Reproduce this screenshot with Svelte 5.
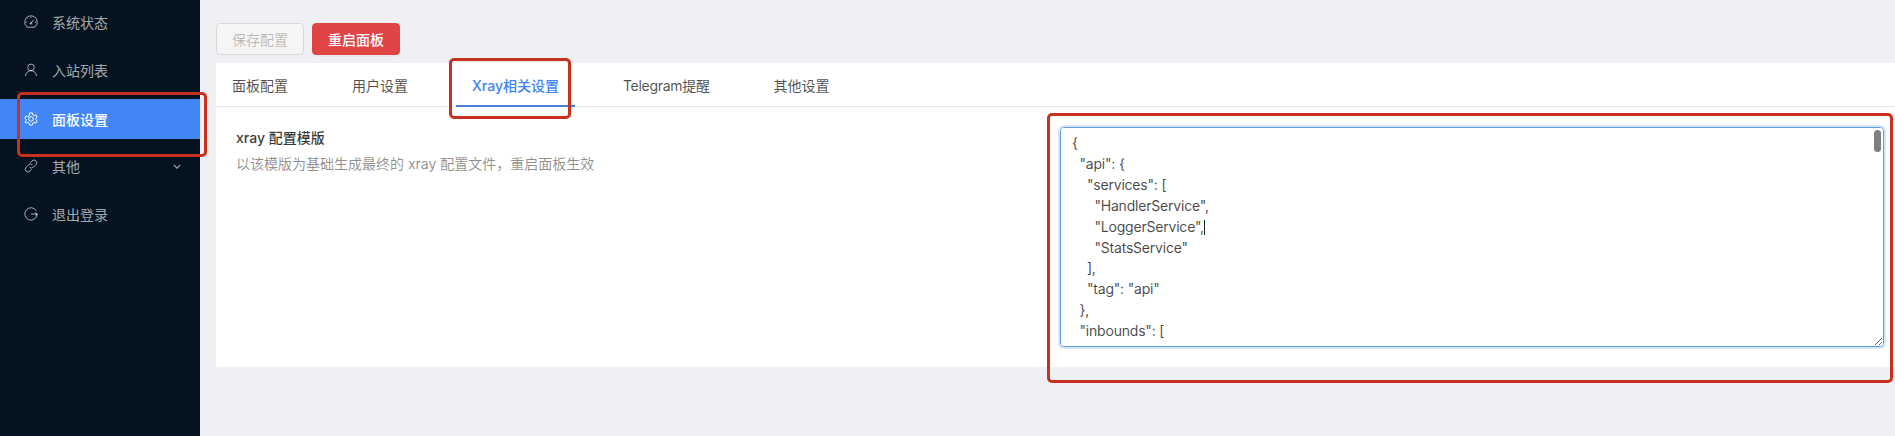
<script>
  const nav = [
    { label: '系统状态', icon: 'dashboard' },
    { label: '入站列表', icon: 'user' },
    { label: '面板设置', icon: 'setting', active: true },
    { label: '其他', icon: 'link', sub: true },
    { label: '退出登录', icon: 'logout' }
  ];
  const tabs = ['面板配置', '用户设置', 'Xray相关设置', 'Telegram提醒', '其他设置'];

  const rules = Array.from({ length: 14 }, (_, i) => `      {
        "type": "field",
        "inboundTag": ["rule-${i}"],
        "outboundTag": "direct"
      },`).join('\n');

  const config = `{
  "api": {
    "services": [
      "HandlerService",
      "LoggerService",
      "StatsService"
    ],
    "tag": "api"
  },
  "inbounds": [
    {
      "listen": "127.0.0.1",
      "port": 62789,
      "protocol": "dokodemo-door",
      "settings": {
        "address": "127.0.0.1"
      },
      "tag": "api"
    }
  ],
  "outbounds": [
    {
      "protocol": "freedom",
      "settings": {}
    },
    {
      "protocol": "blackhole",
      "settings": {},
      "tag": "blocked"
    }
  ],
  "routing": {
    "rules": [
${rules}
    ]
  }
}`;
</script>

<div class="page">
  <aside class="sider">
    {#each nav as item}
      <div class="nav-item" class:active={item.active}>
        <svg class="icon" viewBox="0 0 14 14" fill="none" stroke="currentColor" stroke-width="1">
          {#if item.icon === 'dashboard'}
            <path d="M3.2 12.2A6.3 6.3 0 0 1 7 .9a6.3 6.3 0 0 1 3.8 11.3z" />
            <path d="M7.1 8.2 9.4 4.9M3 7H2.1M11.9 7H11M4 4.1l-.6-.6M7 2.9v-.9" />
            <circle cx="6.9" cy="8.4" r=".8" />
          {:else if item.icon === 'user'}
            <circle cx="7" cy="4.4" r="3.3" />
            <path d="M1.5 13c0-3 2.4-5.3 5.5-5.3s5.5 2.3 5.5 5.3" />
          {:else if item.icon === 'setting'}
            <path d="M5.7.9h2.6l.4 1.8 1.4.8 1.8-.6 1.3 2.2-1.4 1.3v1.2l1.4 1.3-1.3 2.2-1.8-.6-1.4.8-.4 1.8H5.7l-.4-1.8-1.4-.8-1.8.6L.8 9.9l1.4-1.3V7.4L.8 6.1l1.3-2.2 1.8.6 1.4-.8z" />
            <circle cx="7" cy="7" r="2.3" />
          {:else if item.icon === 'link'}
            <path d="M6.3 3.6 8 1.9a2.6 2.6 0 0 1 3.9 3.7L9.3 8.2a2.6 2.6 0 0 1-3.7 0" />
            <path d="M7.7 10.4 6 12.1a2.6 2.6 0 0 1-3.9-3.7l2.6-2.6a2.6 2.6 0 0 1 3.7 0" />
          {:else}
            <path d="M12.4 3.9A6.2 6.2 0 1 0 13.2 7" />
            <path d="M7 7h6.3M11.4 5.6 13.2 7l-1.8 1.4" />
          {/if}
        </svg>
        <span>{item.label}</span>
        {#if item.sub}
          <svg class="chevron" viewBox="0 0 10 6" fill="none" stroke="currentColor" stroke-width="1.4">
            <path d="M1 1l4 4 4-4" />
          </svg>
        {/if}
      </div>
    {/each}
  </aside>

  <main class="content">
    <div class="actions">
      <button class="btn" disabled>保存配置</button>
      <button class="btn danger">重启面板</button>
    </div>

    <section class="card">
      <div class="tabs">
        {#each tabs as tab}
          <div class="tab" class:current={tab.startsWith('Xray')} class:tight={tab.startsWith('Telegram')}>{tab}</div>
        {/each}
      </div>

      <div class="setting-row">
        <div class="meta">
          <div class="title">xray 配置模版</div>
          <div class="desc">以该模版为基础生成最终的 xray 配置文件，重启面板生效</div>
        </div>
        <div class="field">
          <textarea readonly spellcheck="false" value={config}></textarea>
          <i class="caret"></i>
          <i class="thumb"></i>
        </div>
      </div>
    </section>
  </main>

  <div class="mark mark-nav"></div>
  <div class="mark mark-tab"></div>
  <div class="mark mark-field"></div>
</div>

<style>
  :global(body) {
    margin: 0;
    overflow: hidden;
  }
  .page {
    position: relative;
    display: flex;
    height: 436px;
    background: #eff0f4;
    font-family: Inter, 'Noto Sans CJK SC', sans-serif;
    font-size: 14px;
    color: rgba(0, 0, 0, 0.65);
  }
  .sider {
    flex: 0 0 200px;
    background: #051220;
    padding-top: 3px;
    color: rgba(255, 255, 255, 0.65);
  }
  .nav-item {
    box-sizing: border-box;
    display: flex;
    align-items: center;
    height: 40px;
    margin-bottom: 8px;
    padding: 0 16px 2px 24px;
  }
  .nav-item.active {
    padding-bottom: 0;
    background: #4285f4;
    color: #fff;
    font-weight: 500;
  }
  .icon {
    flex: none;
    width: 14px;
    height: 14px;
    margin-right: 14px;
  }
  .chevron {
    width: 8px;
    height: 5px;
    margin-left: auto;
    margin-right: 3px;
  }
  .content {
    flex: 1;
    min-width: 0;
    padding: 23px 0 0 16px;
  }
  .actions {
    display: flex;
    gap: 8px;
    margin-bottom: 8px;
  }
  .btn {
    width: 88px;
    height: 32px;
    padding: 0;
    border: 1px solid #d9d9d9;
    border-radius: 4px;
    background: #f5f5f5;
    color: rgba(0, 0, 0, 0.25);
    font: inherit;
  }
  .btn.danger {
    border-color: #e04545;
    background: #e04545;
    color: #fff;
    font-weight: 500;
    box-shadow: 0 2px 0 rgba(0, 0, 0, 0.03);
  }
  .card {
    height: 304px;
    background: #fff;
  }
  .tabs {
    display: flex;
    gap: 32px;
    height: 43px;
    border-bottom: 1px solid #e4e5e8;
  }
  .tab {
    padding: 0 16px;
    line-height: 45px;
    color: rgba(0, 0, 0, 0.7);
  }
  .tab.tight {
    letter-spacing: -0.3px;
  }
  .tab.current {
    height: 42px;
    border-bottom: 2px solid #4a7fd8;
    color: #4285f4;
    font-weight: 500;
  }
  .setting-row {
    display: flex;
    justify-content: space-between;
    padding: 20px 11px 0 20px;
  }
  .title {
    line-height: 22px;
    font-weight: 500;
    color: rgba(0, 0, 0, 0.78);
  }
  .desc {
    margin-top: 4px;
    line-height: 22px;
    color: rgba(0, 0, 0, 0.45);
  }
  .field {
    position: relative;
    width: 824px;
    height: 220px;
  }
  textarea {
    display: block;
    box-sizing: border-box;
    width: 100%;
    height: 100%;
    padding: 5px 11px;
    border: 1px solid #5a9fdc;
    border-radius: 4px;
    outline: none;
    box-shadow: 0 0 0 2px rgba(66, 133, 244, 0.2);
    background: #fff;
    color: rgba(0, 0, 0, 0.72);
    font: inherit;
    letter-spacing: -0.2px;
    line-height: 20.9px;
    white-space: pre;
    resize: vertical;
  }
  .caret {
    position: absolute;
    left: 144px;
    top: 93px;
    width: 1px;
    height: 15px;
    background: #222;
  }
  .thumb {
    position: absolute;
    top: 3px;
    right: 3px;
    width: 7px;
    height: 22px;
    border-radius: 4px;
    background: #7f7f7f;
  }
  .mark {
    position: absolute;
    box-sizing: border-box;
    border: 3px solid #c8301f;
    border-radius: 5px;
    pointer-events: none;
  }
  .mark-nav {
    left: 17px;
    top: 92px;
    width: 190px;
    height: 65px;
  }
  .mark-tab {
    left: 449px;
    top: 58px;
    width: 122px;
    height: 61px;
  }
  .mark-field {
    left: 1047px;
    top: 113px;
    width: 846px;
    height: 270px;
  }
</style>
